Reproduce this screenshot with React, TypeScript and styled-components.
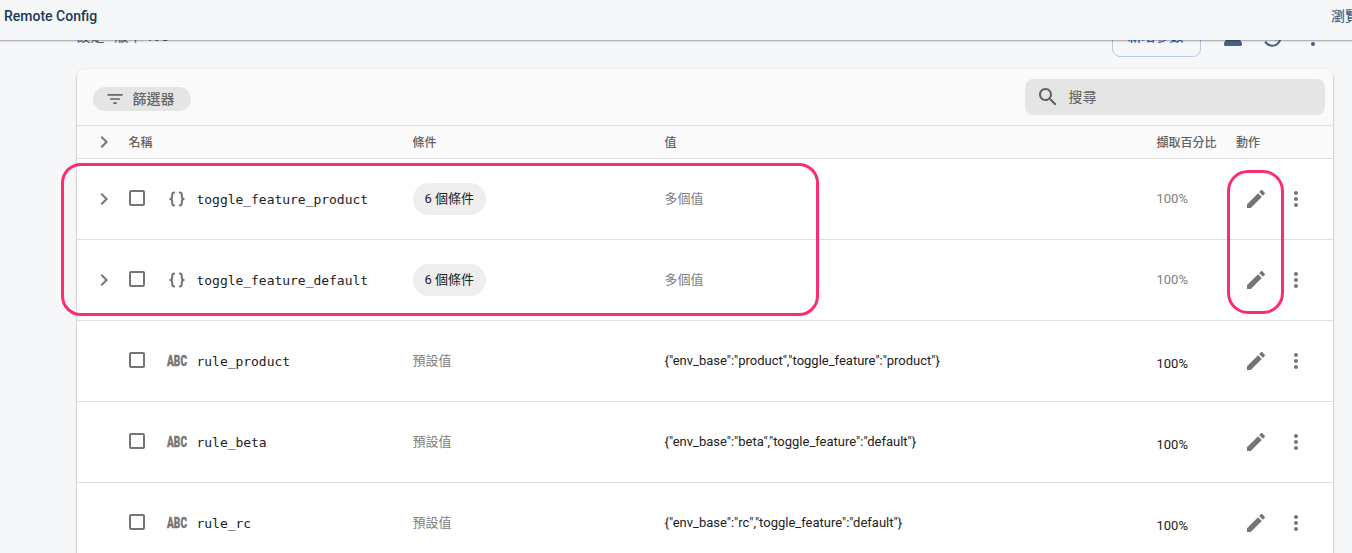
import React from "react";
import styled, { createGlobalStyle, css } from "styled-components";

const GlobalStyle = createGlobalStyle`
  *, *::before, *::after { box-sizing: border-box; }
  html, body { margin: 0; height: 553px; overflow: hidden; background: #f6f7f9; }
  body { font-family: Roboto, "Noto Sans CJK TC", sans-serif; font-size: 13px; color: #212121; }
`;

const Page = styled.div`
  position: relative;
  height: 553px;
  overflow: hidden;
`;

const TopBar = styled.header`
  position: relative;
  z-index: 2;
  display: flex;
  justify-content: space-between;
  height: 40px;
  padding: 6px 0 0 4px;
  line-height: 20px;
  background: #f6f7f9;
  white-space: nowrap;
  box-shadow: 0 1px 1px rgba(0, 0, 0, 0.2), 0 1px 3px rgba(0, 0, 0, 0.14);
`;

const Title = styled.h1`
  margin: 0;
  font-size: 14px;
  font-weight: 500;
  color: #1b3a57;
`;

const DocsLink = styled.a`
  width: 21px;
  font-size: 14px;
  font-weight: 500;
  color: #476282;
`;

const SubHeader = styled.div`
  display: flex;
  justify-content: space-between;
  align-items: flex-start;
  height: 49px;
  margin: -20px 19px 0 76.5px;
`;

const VersionLabel = styled.div`
  padding-top: 6px;
  font-size: 14px;
  line-height: 20px;
  letter-spacing: -0.1px;
  color: #476282;
`;

const SubActions = styled.div`
  display: flex;
  align-items: flex-start;
  color: #476282;
  padding-right: 8.5px;
  svg { display: block; margin-top: 6px; margin-left: 16px; }
`;

const AddButton = styled.button`
  width: 89px;
  height: 37px;
  margin-right: 3.5px;
  padding: 0 2px 5px 0;
  border: 1px solid #b6c8e4;
  border-radius: 8px;
  background: transparent;
  font: 500 14px/28px Roboto, "Noto Sans CJK TC", sans-serif;
  color: #1967d2;
`;

const Card = styled.section`
  margin: 0 19px 0 77px;
  height: 520px;
  border-radius: 8px 8px 0 0;
  background: #fff;
  box-shadow: 0 1px 3px rgba(0, 0, 0, 0.2), 0 1px 2px rgba(0, 0, 0, 0.2);
`;

const FilterBar = styled.div`
  display: flex;
  justify-content: space-between;
  height: 57px;
  padding: 10px 8px 0 16px;
  border-bottom: 1px solid #dedede;
  border-radius: 8px 8px 0 0;
  background: #fafafa;
`;

const FilterChip = styled.button`
  display: flex;
  align-items: center;
  gap: 8px;
  width: 98px;
  height: 24px;
  margin-top: 8px;
  padding: 0 0 0 11.5px;
  border: 0;
  border-radius: 12px;
  background: #e5e5e5;
  font: 500 14px/24px Roboto, "Noto Sans CJK TC", sans-serif;
  color: #666;
`;

const SearchBox = styled.div`
  display: flex;
  align-items: center;
  gap: 8.5px;
  width: 300px;
  height: 36px;
  padding-left: 11px;
  border-radius: 8px;
  background: #e5e5e5;
  font-size: 14px;
  color: #616161;
  span { padding-bottom: 2px; }
`;

const columns = css`
  display: grid;
  grid-template-columns: 51.5px 284px 252px 492px 79.5px 1fr;
`;

const HeadRow = styled.div`
  ${columns}
  align-items: center;
  height: 33px;
  border-bottom: 1px solid #dedede;
  background: #fafafa;
  font-size: 12px;
  font-weight: 500;
  color: #616161;
  > span { padding-bottom: 2px; }
`;

const Row = styled.div`
  ${columns}
  align-items: center;
  height: 81px;
  border-bottom: 1px solid #dedede;
`;

const ExpandCell = styled.div`
  display: flex;
  padding-left: 15px;
  color: #757575;
`;

const NameCell = styled.div`
  display: flex;
  align-items: center;
  padding-left: 0.5px;
`;

const Checkbox = styled.span`
  width: 16px;
  height: 16px;
  margin-bottom: 2px;
  border: 2px solid #757575;
  border-radius: 2px;
`;

const TypeIcon = styled.span`
  display: flex;
  width: 24px;
  margin: 0 7.5px 0 20px;
  color: #757575;
`;

const ParamName = styled.span`
  padding-top: 1px;
  font-family: "DejaVu Sans Mono", monospace;
  font-size: 13px;
  letter-spacing: -0.03px;
  line-height: 20px;
`;

const ConditionChip = styled.span`
  display: inline-block;
  height: 32px;
  margin-left: 0.5px;
  padding: 0 11.5px;
  border-radius: 16px;
  background: #eee;
  line-height: 31px;
`;

const Text = styled.span<{ $muted?: boolean; $drop?: number }>`
  line-height: 20px;
  padding-top: ${(p) => p.$drop ?? 0}px;
  color: ${(p) => (p.$muted ? "#808080" : "#212121")};
`;

const ActionCell = styled.div`
  display: flex;
  gap: 16px;
  padding-left: 8px;
  color: #757575;
`;

const Annotation = styled.div<{ $x: number; $y: number; $w: number; $h: number; $r: number }>`
  position: absolute;
  z-index: 3;
  left: ${(p) => p.$x}px;
  top: ${(p) => p.$y}px;
  width: ${(p) => p.$w}px;
  height: ${(p) => p.$h}px;
  border: 3px solid #fc2d6f;
  border-radius: ${(p) => p.$r}px;
`;

const Icon = ({ d, size = 24 }: { d: string; size?: number }) => (
  <svg width={size} height={size} viewBox="0 0 24 24" fill="currentColor">
    <path d={d} />
  </svg>
);

const CHEVRON = "M10 6L8.59 7.41 13.17 12l-4.58 4.59L10 18l6-6z";
const MORE =
  "M12 8c1.1 0 2-.9 2-2s-.9-2-2-2-2 .9-2 2 .9 2 2 2zm0 2c-1.1 0-2 .9-2 2s.9 2 2 2 2-.9 2-2-.9-2-2-2zm0 6c-1.1 0-2 .9-2 2s.9 2 2 2 2-.9 2-2-.9-2-2-2z";
const EDIT =
  "M3 17.25V21h3.75L17.81 9.94l-3.75-3.75L3 17.25zM20.71 7.04c.39-.39.39-1.02 0-1.41l-2.34-2.34c-.39-.39-1.02-.39-1.41 0l-1.83 1.83 3.75 3.75 1.83-1.83z";
const FILTER = "M10 18h4v-2h-4v2zM3 6v2h18V6H3zm3 7h12v-2H6v2z";
const SEARCH =
  "M15.5 14h-.79l-.28-.27C15.41 12.59 16 11.11 16 9.5 16 5.91 13.09 3 9.5 3S3 5.91 3 9.5 5.91 16 9.5 16c1.61 0 3.09-.59 4.23-1.57l.27.28v.79l5 4.99L20.49 19l-4.99-5zm-6 0C7.01 14 5 11.99 5 9.5S7.01 5 9.5 5 14 7.01 14 9.5 11.99 14 9.5 14z";
const PERSON =
  "M12 12c2.21 0 4-1.79 4-4s-1.79-4-4-4-4 1.79-4 4 1.79 4 4 4zm-5 1.5c-2.200 0-4 2-4 4.500v.5c0 .9.600 1.500 1.500 1.500h15c.9 0 1.500-.6 1.500-1.500v-.5c0-2.500-1.800-4.500-4-4.500z";

const BracesIcon = () => (
  <svg width="24" height="24" viewBox="0 0 24 24" fill="none" stroke="currentColor" strokeWidth="2">
    <path d="M10 5.500H9.500Q7.200 5.500 7.200 7.700V9.800Q7.200 12 4.500 12Q7.200 12 7.200 14.200V16.300Q7.200 18.500 9.500 18.500H10" />
    <path d="M14 5.500H14.500Q16.800 5.500 16.800 7.700V9.800Q16.800 12 19.500 12Q16.800 12 16.800 14.200V16.300Q16.800 18.500 14.500 18.500H14" />
  </svg>
);

const HistoryIcon = () => (
  <svg width="24" height="24" viewBox="0 0 24 24" fill="none" stroke="currentColor" strokeWidth="2">
    <path d="M4.200 8A8 8 0 1 1 4.200 15.500M4 4v5h5M12 7v5l3.500 2" />
  </svg>
);

const StringIcon = () => (
  <svg width="24" height="24" viewBox="0 0 24 24" overflow="visible">
    <text
      x="2"
      y="17"
      fontFamily="Roboto, sans-serif"
      fontWeight="900"
      fontSize="14"
      textLength="20"
      lengthAdjust="spacingAndGlyphs"
      fill="currentColor"
      stroke="currentColor"
      strokeWidth="0.3"
    >
      ABC
    </text>
  </svg>
);

type Param = { name: string; value?: string };

const PARAMS: Param[] = [
  { name: "toggle_feature_product" },
  { name: "toggle_feature_default" },
  { name: "rule_product", value: '{"env_base":"product","toggle_feature":"product"}' },
  { name: "rule_beta", value: '{"env_base":"beta","toggle_feature":"default"}' },
  { name: "rule_rc", value: '{"env_base":"rc","toggle_feature":"default"}' },
];

const ParamRow = ({ name, value }: Param) => {
  const grouped = value === undefined;
  return (
    <Row>
      <ExpandCell>{grouped && <Icon d={CHEVRON} />}</ExpandCell>
      <NameCell>
        <Checkbox />
        <TypeIcon>{grouped ? <BracesIcon /> : <StringIcon />}</TypeIcon>
        <ParamName>{name}</ParamName>
      </NameCell>
      <div>{grouped ? <ConditionChip>6 個條件</ConditionChip> : <Text $muted>預設值</Text>}</div>
      <Text $muted={grouped}>{value ?? "多個值"}</Text>
      <Text $muted={grouped} $drop={grouped ? 0 : 5}>
        100%
      </Text>
      <ActionCell>
        <Icon d={EDIT} />
        <Icon d={MORE} />
      </ActionCell>
    </Row>
  );
};

export default function App() {
  return (
    <Page>
      <GlobalStyle />
      <TopBar>
        <Title>Remote Config</Title>
        <DocsLink>瀏覽</DocsLink>
      </TopBar>
      <SubHeader>
        <VersionLabel>設定 · 版本 198</VersionLabel>
        <SubActions>
          <AddButton>新增參數</AddButton>
          <Icon d={PERSON} />
          <HistoryIcon />
          <Icon d={MORE} />
        </SubActions>
      </SubHeader>
      <Card>
        <FilterBar>
          <FilterChip>
            <Icon d={FILTER} size={20} />
            篩選器
          </FilterChip>
          <SearchBox>
            <Icon d={SEARCH} />
            <span>搜尋</span>
          </SearchBox>
        </FilterBar>
        <HeadRow>
          <ExpandCell>
            <Icon d={CHEVRON} />
          </ExpandCell>
          <span>名稱</span>
          <span>條件</span>
          <span>值</span>
          <span>擷取百分比</span>
          <span>動作</span>
        </HeadRow>
        {PARAMS.map((p) => (
          <ParamRow key={p.name} {...p} />
        ))}
      </Card>
      <Annotation $x={61} $y={163} $w={758} $h={153} $r={20} />
      <Annotation $x={1227} $y={170} $w={57} $h={144} $r={21} />
    </Page>
  );
}
